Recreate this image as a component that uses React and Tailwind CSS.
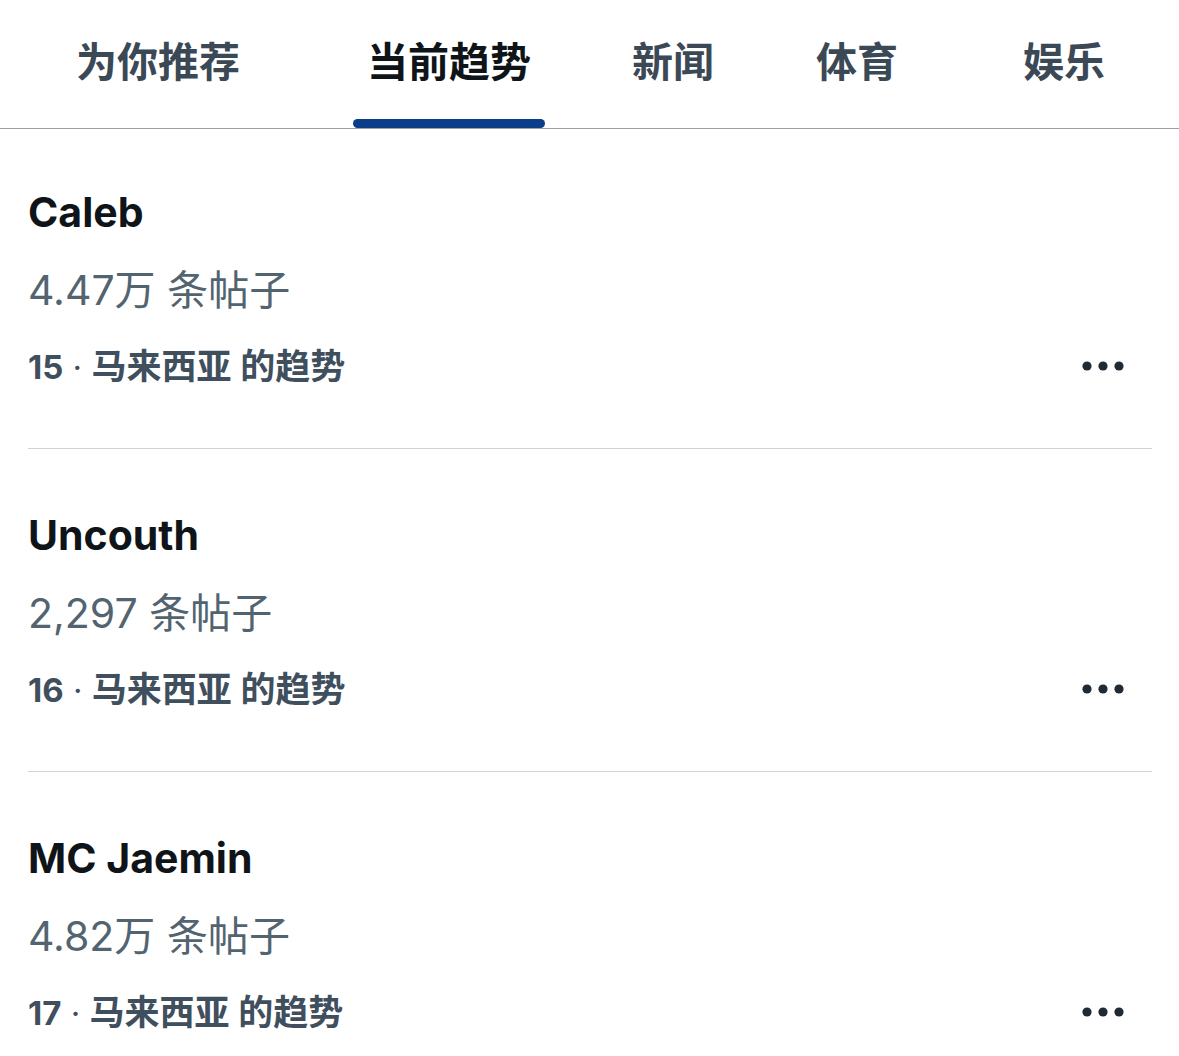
import React from "react";

const FONT = { fontFamily: 'Inter, "Noto Sans CJK SC", sans-serif' };

function Dots() {
  return (
    <svg width="42" height="10" viewBox="0 0 42 10" className="block">
      <circle cx="5" cy="5" r="4.6" fill="#1f2a35" />
      <circle cx="21" cy="5" r="4.6" fill="#1f2a35" />
      <circle cx="37" cy="5" r="4.6" fill="#1f2a35" />
    </svg>
  );
}

const items = [
  { title: "Caleb", count: "4.47万 条帖子", rank: "15" },
  { title: "Uncouth", count: "2,297 条帖子", rank: "16" },
  { title: "MC Jaemin", count: "4.82万 条帖子", rank: "17" },
];

export default function App() {
  return (
    <div className="w-[1179px] h-[1056px] bg-white overflow-hidden" style={FONT}>
      <div className="flex h-[129px] border-b border-[#9aa1a8] pl-[76px]">
        <div className="flex flex-col items-center w-[164px]">
          <div className="mt-[38px] text-[41px] leading-[48px] font-bold text-[#3b4956] whitespace-nowrap">为你推荐</div>
        </div>
        <div className="flex flex-col items-center w-[192px] ml-[113px]">
          <div className="mt-[38px] text-[41px] leading-[48px] font-bold text-[#0f1419] whitespace-nowrap">当前趋势</div>
          <div className="mt-auto h-[9px] w-[192px] rounded-full bg-[#0b3d89]" />
        </div>
        <div className="flex flex-col items-center w-[82px] ml-[87px]">
          <div className="mt-[38px] text-[41px] leading-[48px] font-bold text-[#3b4956] whitespace-nowrap">新闻</div>
        </div>
        <div className="flex flex-col items-center w-[82px] ml-[102px]">
          <div className="mt-[38px] text-[41px] leading-[48px] font-bold text-[#3b4956] whitespace-nowrap">体育</div>
        </div>
        <div className="flex flex-col items-center w-[82px] ml-[125px]">
          <div className="mt-[38px] text-[41px] leading-[48px] font-bold text-[#3b4956] whitespace-nowrap">娱乐</div>
        </div>
      </div>
      <div className="flex flex-col">
        {items.map((it, i) => (
          <div key={i} className="ml-[28px] mr-[27px] border-b border-[#cfd3d6]">
            <div className={(i === 0 ? "pt-[58px]" : "pt-[61px]") + " pb-[60px]"}>
              <div className="text-[41px] leading-[50px] font-bold text-[#0f1419]">{it.title}</div>
              <div className="mt-[28px] text-[41px] leading-[50px] text-[#536471]">{it.count}</div>
              <div className="mt-[29px] flex items-center justify-between h-[44px]">
                <div className="text-[33px] leading-[44px] font-semibold text-[#3f4f5e] whitespace-nowrap">
                  <span className="font-bold">{it.rank}</span>
                  <span className="font-normal"> · </span>
                  <span className="text-[35px]">马来西亚 的趋势</span>
                </div>
                <div className="mr-[28px]">
                  <Dots />
                </div>
              </div>
            </div>
          </div>
        ))}
      </div>
    </div>
  );
}
